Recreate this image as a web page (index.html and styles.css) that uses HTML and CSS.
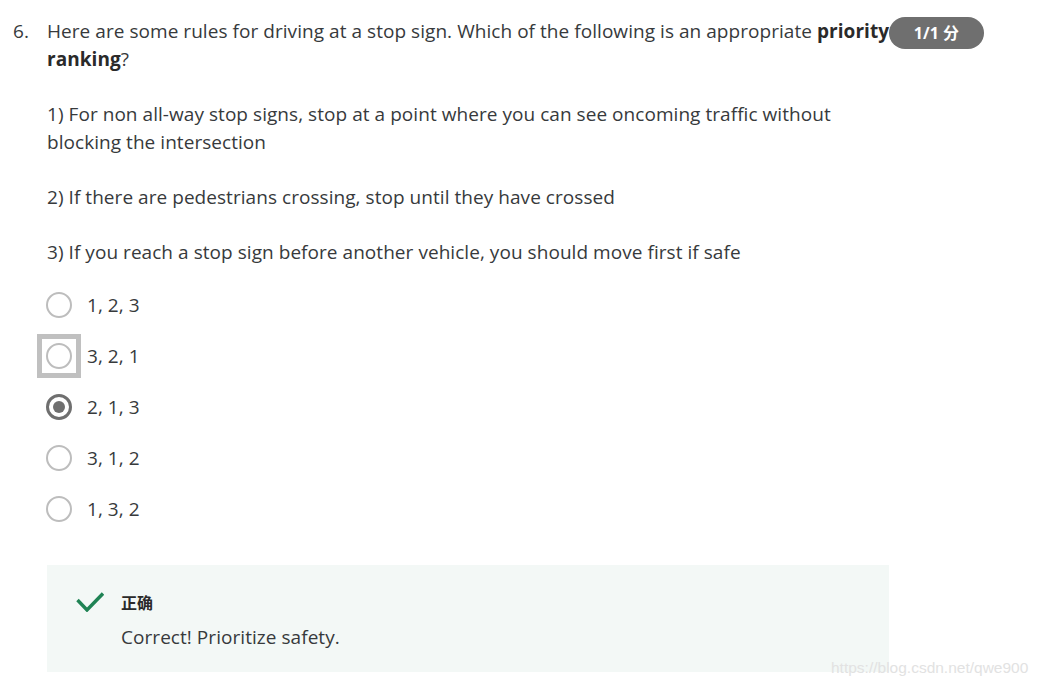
FILE: index.html
```html
<!DOCTYPE html>
<html lang="en">
<head>
    <meta charset="UTF-8">
    <meta name="viewport" content="width=device-width, initial-scale=1.0">
    <title>Quiz Question 6</title>
    <link rel="stylesheet" href="styles.css">
</head>
<body>
    <div class="question">
        <div class="question-num">6.</div>
        <div class="question-body">
            <p class="prompt">Here are some rules for driving at a stop sign. Which of the following is an appropriate <strong>priority ranking</strong>?</p>
            <span class="score-badge">1/1 分</span>
            <p>1) For non all-way stop signs, stop at a point where you can see oncoming traffic without blocking the intersection</p>
            <p>2) If there are pedestrians crossing, stop until they have crossed</p>
            <p>3) If you reach a stop sign before another vehicle, you should move first if safe</p>

            <ul class="options">
                <li class="option"><span class="radio-box"><span class="radio"></span></span>1, 2, 3</li>
                <li class="option"><span class="radio-box focused"><span class="radio"></span></span>3, 2, 1</li>
                <li class="option"><span class="radio-box"><span class="radio checked"></span></span>2, 1, 3</li>
                <li class="option"><span class="radio-box"><span class="radio"></span></span>3, 1, 2</li>
                <li class="option"><span class="radio-box"><span class="radio"></span></span>1, 3, 2</li>
            </ul>

            <div class="feedback">
                <svg class="check" width="28" height="20" viewBox="0 0 28 20">
                    <path d="M1.5 8 L11 18 L27 1.5" fill="none" stroke="#1f8354" stroke-width="3.4"/>
                </svg>
                <div class="feedback-text">
                    <div class="feedback-title">正确</div>
                    <div>Correct! Prioritize safety.</div>
                </div>
            </div>
        </div>
    </div>
    <div class="watermark">https://blog.csdn.net/qwe900</div>
</body>
</html>
```

FILE: styles.css
```css
* {
    margin: 0;
    padding: 0;
    box-sizing: border-box;
}

body {
    font-family: 'Open Sans', 'Noto Sans CJK SC', sans-serif;
    font-size: 19px;
    line-height: 28px;
    letter-spacing: 0.05px;
    color: #373a3c;
    background: #fff;
}

.question {
    display: flex;
    padding: 17px 0 0 13px;
}

.question-num {
    width: 34px;
}

.question-body {
    width: 843px;
    position: relative;
}

.question-body p {
    margin-bottom: 27px;
}

.question-body strong {
    font-weight: 700;
    color: #2a2a2a;
}

.score-badge {
    position: absolute;
    top: 0;
    left: 842px;
    width: 95px;
    height: 32px;
    border-radius: 16px;
    background: #6f6f6f;
    color: #fff;
    font-size: 16px;
    font-weight: 700;
    line-height: 32px;
    text-align: center;
}

.options {
    list-style: none;
    margin-top: -14px;
    margin-left: -10px;
}

.option {
    display: flex;
    align-items: center;
    gap: 6px;
    height: 51px;
}

.radio-box {
    width: 44px;
    height: 44px;
    display: flex;
    align-items: center;
    justify-content: center;
    border: 5px solid transparent;
}

.radio-box.focused {
    border-color: #c0c0c0;
}

.radio {
    width: 26px;
    height: 26px;
    border-radius: 50%;
    border: 2px solid #bdbdbd;
    display: flex;
    align-items: center;
    justify-content: center;
}

.radio.checked {
    border: 3px solid #6f6f6f;
}

.radio.checked::after {
    content: '';
    width: 12px;
    height: 12px;
    border-radius: 50%;
    background: #6f6f6f;
}

.feedback {
    display: flex;
    align-items: flex-start;
    gap: 17px;
    margin-top: 31px;
    background: #f3f8f6;
    padding: 24px 20px 21px 29px;
    width: 842px;
}

.check {
    margin-top: 3px;
}

.feedback-title {
    font-size: 16px;
    font-weight: 700;
    color: #2a2a2a;
    margin-bottom: 6px;
}

.watermark {
    position: absolute;
    left: 831px;
    top: 657px;
    font-family: 'Liberation Sans', Arial, sans-serif;
    font-size: 15.5px;
    line-height: 22px;
    letter-spacing: 0;
    color: #e2e2e2;
}
```
